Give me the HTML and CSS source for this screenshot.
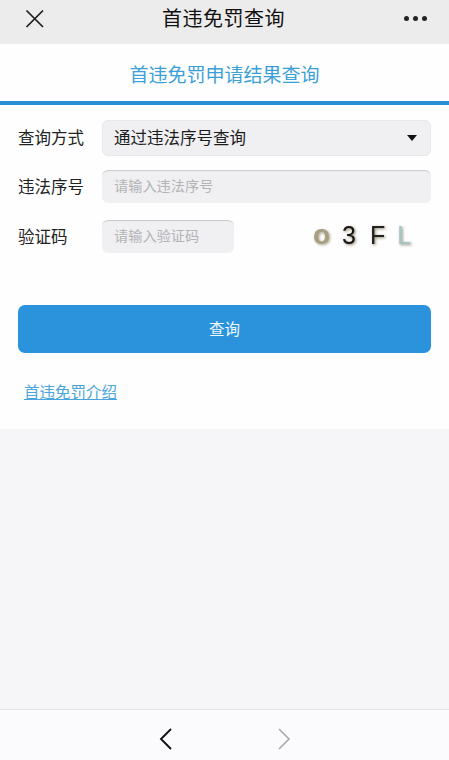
FILE: index.html
```html
<!DOCTYPE html>
<html lang="zh-CN">
<head>
<meta charset="utf-8">
<title>首违免罚查询</title>
<link rel="stylesheet" href="styles.css">
</head>
<body>
<div class="page">
  <header class="navbar">
    <svg class="nav-close" width="20" height="20" viewBox="0 0 20 20"><path d="M1.5 1.5 18 18M18 1.5 1.5 18" stroke="#1c1c1c" stroke-width="1.7" fill="none"/></svg>
    <h1 class="nav-title">首违免罚查询</h1>
    <div class="nav-more"><span class="dot"></span><span class="dot"></span><span class="dot"></span></div>
  </header>
  <section class="card">
    <h2 class="card-title">首违免罚申请结果查询</h2>
    <form class="form">
      <div class="row row-select">
        <span class="label">查询方式</span>
        <div class="select"><span class="select-text">通过违法序号查询</span><span class="caret"></span></div>
      </div>
      <div class="row row-serial">
        <span class="label">违法序号</span>
        <div class="input input-full">请输入违法序号</div>
      </div>
      <div class="row row-code">
        <span class="label">验证码</span>
        <div class="input input-short">请输入验证码</div>
        <div class="captcha">
          <span class="cap cap-o">o</span>
          <span class="cap cap-3">3</span>
          <span class="cap cap-f">F</span>
          <span class="cap cap-l">L</span>
        </div>
      </div>
      <div class="btn">查询</div>
      <a class="intro" href="#">首违免罚介绍</a>
    </form>
  </section>
  <main class="blank"></main>
  <footer class="toolbar">
    <svg class="tool" width="14" height="24" viewBox="0 0 14 24"><path d="M12 2 2 12l10 10" stroke="#111" stroke-width="1.9" fill="none"/></svg>
    <svg class="tool" width="14" height="24" viewBox="0 0 14 24"><path d="M2 2l10 10L2 22" stroke="#adadad" stroke-width="1.7" fill="none"/></svg>
  </footer>
</div>
</body>
</html>
```

FILE: styles.css
```css
* { box-sizing: border-box; margin: 0; padding: 0; }
html, body { width: 449px; height: 760px; overflow: hidden; }
body { font-family: "Noto Sans CJK SC", "Liberation Sans", sans-serif; background: #f6f6f8; }
.page { width: 449px; height: 760px; display: flex; flex-direction: column; }

.navbar { height: 44px; flex: none; background: #ececec; display: flex; align-items: center; justify-content: space-between; padding: 0 22px 0 25px; }
.nav-close { display: block; margin-top: -7px; }
.nav-title { font-size: 20px; font-weight: 400; line-height: 28px; color: #111; margin-top: -9px; margin-left: -2px; letter-spacing: 0.5px; }
.nav-more { display: flex; gap: 4px; margin-top: -8px; }
.dot { width: 5px; height: 5px; border-radius: 50%; background: #222; }

.card { flex: none; height: 385px; background: #fefefe; }
.card-title { height: 61px; font-size: 19px; font-weight: 400; line-height: 60px; text-align: center; color: #3b9fd8; border-bottom: 4px solid #2b8fd6; }
.form { padding: 15px 18px 0; display: flex; flex-direction: column; }
.row { display: flex; align-items: center; }
.label { width: 84px; flex: none; font-size: 16.5px; line-height: 24px; color: #222; padding-bottom: 2px; height: 26px; }
.select { flex: 1; height: 36px; border-radius: 6px; background: #f0eff2; border: 1px solid #e8e7ea; display: flex; align-items: center; justify-content: space-between; padding: 0 13px 0 11px; font-size: 16.5px; color: #1c1c1c; }
.select-text { line-height: 24px; height: 26px; }
.caret { width: 0; height: 0; border-left: 5px solid transparent; border-right: 5px solid transparent; border-top: 6px solid #111; }
.input { height: 33px; border-radius: 6px; background: #f0eff1; box-shadow: inset 0 2px 1px -1px #c9c8cb; font-size: 14.2px; line-height: 31px; color: #b4b4b8; padding-left: 12px; }
.input-full { flex: 1; }
.input-short { width: 132px; flex: none; }
.row-serial { margin-top: 14px; }
.row-code { margin-top: 17px; }
.captcha { flex: 1; height: 33px; display: flex; align-items: center; gap: 15px; padding-left: 79px; padding-bottom: 4px; font-family: "Liberation Sans", sans-serif; font-size: 25px; line-height: 30px; filter: blur(0.4px); }
.cap-o { color: #a79f84; font-size: 28px; font-weight: 700; text-shadow: 1px 1px 3px #a89f84; }
.cap-3 { color: #141414; text-shadow: 1px 1px 3px #8a7f5d; margin-left: -3px; }
.cap-f { color: #222; text-shadow: 1px 1px 3px #8a7f5d; margin-left: -1px; }
.cap-l { color: #a4c6c4; text-shadow: 1px 1px 3px #8a8f84; margin-left: -3px; }
.btn { margin-top: 52px; height: 48px; border-radius: 7px; background: #2a93dc; color: #f2f8fd; font-size: 15.5px; line-height: 47px; text-align: center; }
.intro { margin-top: 26px; margin-left: 6px; font-size: 15.5px; line-height: 24px; color: #4aa5dc; text-decoration: underline; align-self: flex-start; }

.blank { flex: 1; background: #f6f6f8; }
.toolbar { height: 51px; flex: none; background: #fbfafc; border-top: 1px solid #e6e6e8; display: flex; justify-content: center; gap: 104px; padding-top: 17px; padding-left: 1px; }
.tool { display: block; }
```
